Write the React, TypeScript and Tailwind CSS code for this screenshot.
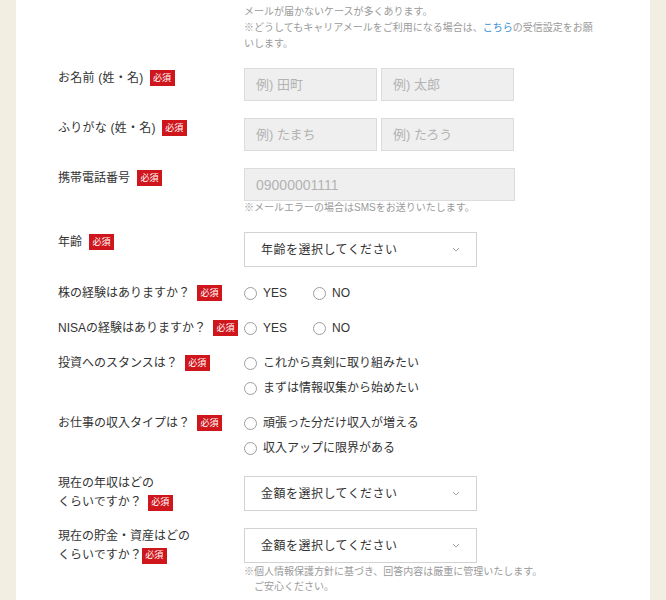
import React from "react";

function Badge({ className = "" }: { className?: string }) {
  return (
    <span
      className={`inline-flex items-center justify-center w-[25px] h-[16px] bg-[#d0161d] text-white text-[9px] leading-none align-middle tracking-normal ${className}`}
    >
      必須
    </span>
  );
}

function Radio({ label }: { label: string }) {
  return (
    <label className="flex items-center h-[20px]">
      <span className="w-[13px] h-[13px] rounded-full border-[1.5px] border-[#9d9d9d] bg-white shrink-0" />
      <span className="ml-[6px] text-[12px] text-[#333]">{label}</span>
    </label>
  );
}

function Chevron() {
  return (
    <svg width="8" height="5" viewBox="0 0 8 5" fill="none">
      <path d="M1 1l3 3 3-3" stroke="#aaa" strokeWidth="1" />
    </svg>
  );
}

function Select({ text }: { text: string }) {
  return (
    <div className="w-[233px] h-[35px] border border-[#d2d2d2] bg-white flex items-center justify-between pl-[16px] pr-[16px]">
      <span className="text-[12px] text-[#333] tracking-[0.04em]">{text}</span>
      <Chevron />
    </div>
  );
}

function TextInput({ placeholder, className = "" }: { placeholder: string; className?: string }) {
  return (
    <input
      placeholder={placeholder}
      className={`h-[33px] bg-[#efefef] border-[1.5px] border-[#dcdcdc] pl-[11px] text-[13px] placeholder:text-[#b3b3b3] outline-none ${className}`}
    />
  );
}

export default function App() {
  return (
    <div className="min-h-[600px] bg-[#f2eee1] font-['Liberation_Sans','Noto_Sans_CJK_JP',sans-serif] text-[#333]">
      <div className="mx-[16px] min-h-[600px] bg-white pl-[42px] pt-[4px]">
        {/* Mail note */}
        <div className="flex">
          <div className="w-[186px] shrink-0" />
          <div className="w-[356px] text-[10px] leading-[16px] text-[#9a9a9a]">
            <p>メールが届かないケースが多くあります。</p>
            <p>
              ※どうしてもキャリアメールをご利用になる場合は、<span className="text-[#3a8fd6]">こちら</span>の受信設定をお願いします。
            </p>
          </div>
        </div>

        {/* Name */}
        <div className="flex mt-[16px]">
          <div className="w-[186px] shrink-0 flex items-center h-[20px] text-[12px] tracking-[0.02em]">
            お名前 (姓・名)
            <Badge className="ml-[6px]" />
          </div>
          <div className="flex gap-[4px]">
            <TextInput placeholder="例) 田町" className="w-[133px]" />
            <TextInput placeholder="例) 太郎" className="w-[133px]" />
          </div>
        </div>

        {/* Furigana */}
        <div className="flex mt-[17px]">
          <div className="w-[186px] shrink-0 flex items-center h-[20px] text-[12px] tracking-[0.02em]">
            ふりがな (姓・名)
            <Badge className="ml-[6px]" />
          </div>
          <div className="flex gap-[4px]">
            <TextInput placeholder="例) たまち" className="w-[133px]" />
            <TextInput placeholder="例) たろう" className="w-[133px]" />
          </div>
        </div>

        {/* Phone */}
        <div className="flex mt-[17px]">
          <div className="w-[186px] shrink-0 flex items-center h-[20px] text-[12px]">
            携帯電話番号
            <Badge className="ml-[7px]" />
          </div>
          <div>
            <TextInput placeholder="09000001111" className="w-[271px] text-[14px]" />
            <p className="text-[10px] leading-[14px] text-[#9a9a9a]">
              ※メールエラーの場合はSMSをお送りいたします。
            </p>
          </div>
        </div>

        {/* Age */}
        <div className="flex mt-[17px]">
          <div className="w-[186px] shrink-0 flex items-center h-[20px] text-[12px]">
            年齢
            <Badge className="ml-[7px]" />
          </div>
          <Select text="年齢を選択してください" />
        </div>

        {/* Stock */}
        <div className="flex items-center mt-[16px]">
          <div className="w-[186px] shrink-0 flex items-center h-[20px] text-[12px]">
            株の経験はありますか？
            <Badge className="ml-[7px]" />
          </div>
          <div className="flex">
            <div className="w-[69px]">
              <Radio label="YES" />
            </div>
            <Radio label="NO" />
          </div>
        </div>

        {/* NISA */}
        <div className="flex items-center mt-[15px]">
          <div className="w-[186px] shrink-0 flex items-center h-[20px] text-[12px]">
            NISAの経験はありますか？
            <Badge className="ml-[7px]" />
          </div>
          <div className="flex">
            <div className="w-[69px]">
              <Radio label="YES" />
            </div>
            <Radio label="NO" />
          </div>
        </div>

        {/* Stance */}
        <div className="flex mt-[15px]">
          <div className="w-[186px] shrink-0 flex items-center h-[20px] text-[12px]">
            投資へのスタンスは？
            <Badge className="ml-[7px]" />
          </div>
          <div className="flex flex-col gap-[5px]">
            <Radio label="これから真剣に取り組みたい" />
            <Radio label="まずは情報収集から始めたい" />
          </div>
        </div>

        {/* Income type */}
        <div className="flex mt-[15px]">
          <div className="w-[186px] shrink-0 flex items-center h-[20px] text-[12px]">
            お仕事の収入タイプは？
            <Badge className="ml-[7px]" />
          </div>
          <div className="flex flex-col gap-[5px]">
            <Radio label="頑張った分だけ収入が増える" />
            <Radio label="収入アップに限界がある" />
          </div>
        </div>

        {/* Annual income */}
        <div className="flex items-start mt-[18px] h-[35px]">
          <div className="w-[186px] shrink-0 text-[12px] leading-[19px] -mt-[2px]">
            現在の年収はどの
            <br />
            くらいですか？
            <Badge className="ml-[6px]" />
          </div>
          <Select text="金額を選択してください" />
        </div>

        {/* Savings */}
        <div className="flex mt-[17px]">
          <div className="w-[186px] shrink-0 text-[12px] leading-[19px] -mt-[1px]">
            現在の貯金・資産はどの
            <br />
            くらいですか？
            <Badge />
          </div>
          <div>
            <Select text="金額を選択してください" />
            <div className="mt-[1px] text-[10px] leading-[15px] text-[#9a9a9a]">
              <p>※個人情報保護方針に基づき、回答内容は厳重に管理いたします。</p>
              <p className="pl-[10px]">ご安心ください。</p>
            </div>
          </div>
        </div>
      </div>
    </div>
  );
}
